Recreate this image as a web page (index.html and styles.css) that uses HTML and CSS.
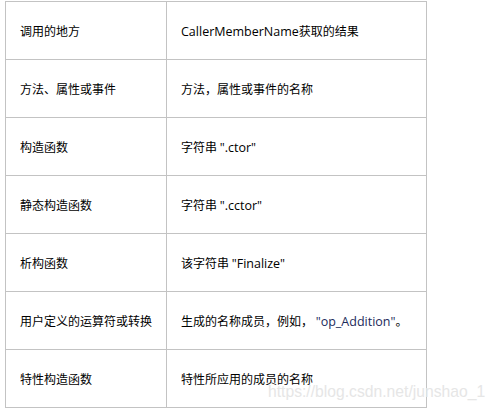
FILE: index.html
```html
<!DOCTYPE html>
<html lang="zh-CN">
<head>
<meta charset="utf-8">
<title>CallerMemberName</title>
<link rel="stylesheet" href="styles.css">
</head>
<body>
<div class="page">
  <table class="grid">
    <tr><td class="c1">调用的地方</td><td class="c2"><span class="en">CallerMemberName</span>获取的结果</td></tr>
    <tr><td class="c1">方法、属性或事件</td><td class="c2">方法，属性或事件的名称</td></tr>
    <tr><td class="c1">构造函数</td><td class="c2">字符串 <span class="en">".ctor"</span></td></tr>
    <tr><td class="c1">静态构造函数</td><td class="c2">字符串 <span class="en">".cctor"</span></td></tr>
    <tr><td class="c1">析构函数</td><td class="c2">该字符串 <span class="en">"Finalize"</span></td></tr>
    <tr><td class="c1">用户定义的运算符或转换</td><td class="c2">生成的名称成员，例如， <span class="en code">"op_Addition"</span>。</td></tr>
    <tr><td class="c1">特性构造函数</td><td class="c2">特性所应用的成员的名称</td></tr>
  </table>
  <div class="watermark">https://blog.csdn.net/junshao_1</div>
</div>
</body>
</html>
```

FILE: styles.css
```css
html, body {
  margin: 0;
  padding: 0;
  background: #ffffff;
}

.page {
  position: relative;
  width: 493px;
  height: 410px;
  overflow: hidden;
  padding: 1px 0 0 5px;
  box-sizing: border-box;
}

.grid {
  border-collapse: collapse;
  table-layout: fixed;
  width: 422px;
  font-family: "Noto Sans CJK SC", "Open Sans", sans-serif;
  font-size: 12px;
  color: #000000;
}

.grid td {
  border: 1px solid #c3c3c3;
  height: 58px;
  padding: 0 0 0 14px;
  box-sizing: border-box;
  vertical-align: middle;
  white-space: nowrap;
}

.c1 {
  width: 161px;
}

.c2 {
  width: 260px;
}

.en {
  font-family: "Open Sans", sans-serif;
  font-size: 12.5px;
}

.code {
  color: #1c2a5a;
}

.watermark {
  position: absolute;
  left: 268px;
  top: 383px;
  font-family: "Liberation Sans", Arial, sans-serif;
  font-size: 15.7px;
  color: #e6e6e6;
  white-space: nowrap;
}
```
